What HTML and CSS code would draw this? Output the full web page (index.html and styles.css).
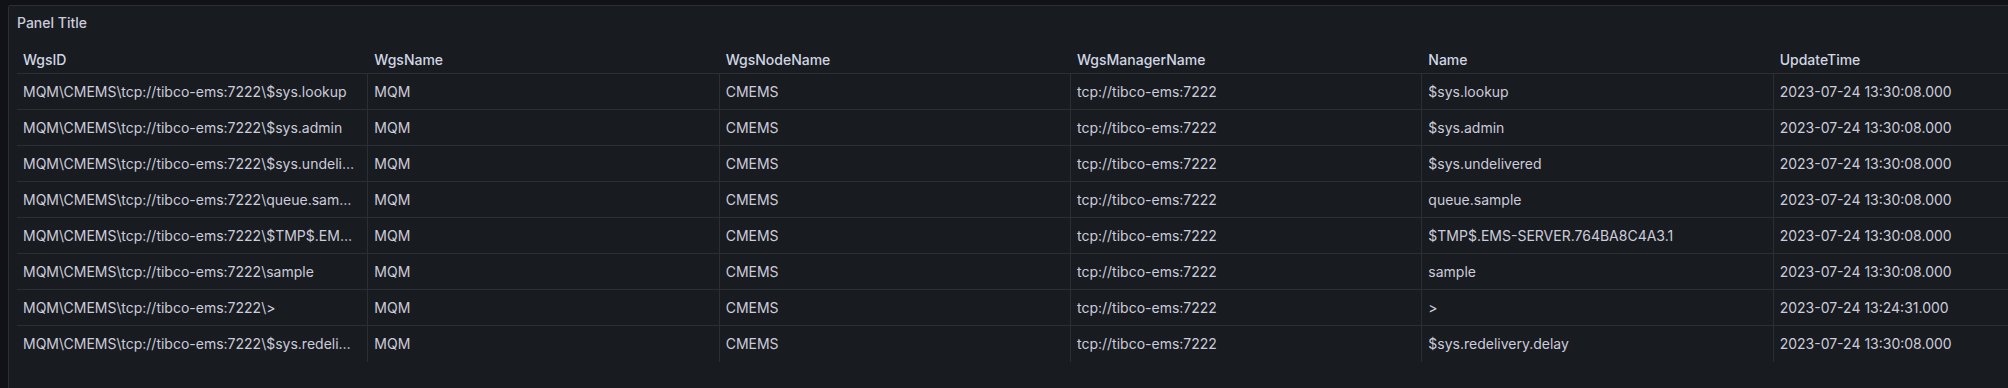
FILE: index.html
```html
<!DOCTYPE html>
<html>
  <head>
    <title>Panel Title</title>
    <link rel="stylesheet" href="styles.css">
  </head>
  <body>
    <div class="panel">
      <div class="panel-header">
        <div class="panel-title">Panel Title</div>
      </div>
      <div class="panel-content">
        <div class="table">
          <div class="table-head">
            <div class="th">WgsID</div>
            <div class="th">WgsName</div>
            <div class="th">WgsNodeName</div>
            <div class="th">WgsManagerName</div>
            <div class="th">Name</div>
            <div class="th">UpdateTime</div>
          </div>
          <div class="table-body">
            <div class="tr">
              <div class="td">MQM\CMEMS\tcp://tibco-ems:7222\$sys.lookup</div>
              <div class="td">MQM</div>
              <div class="td">CMEMS</div>
              <div class="td">tcp://tibco-ems:7222</div>
              <div class="td">$sys.lookup</div>
              <div class="td">2023-07-24 13:30:08.000</div>
            </div>
            <div class="tr">
              <div class="td">MQM\CMEMS\tcp://tibco-ems:7222\$sys.admin</div>
              <div class="td">MQM</div>
              <div class="td">CMEMS</div>
              <div class="td">tcp://tibco-ems:7222</div>
              <div class="td">$sys.admin</div>
              <div class="td">2023-07-24 13:30:08.000</div>
            </div>
            <div class="tr">
              <div class="td">MQM\CMEMS\tcp://tibco-ems:7222\$sys.undelivered</div>
              <div class="td">MQM</div>
              <div class="td">CMEMS</div>
              <div class="td">tcp://tibco-ems:7222</div>
              <div class="td">$sys.undelivered</div>
              <div class="td">2023-07-24 13:30:08.000</div>
            </div>
            <div class="tr">
              <div class="td">MQM\CMEMS\tcp://tibco-ems:7222\queue.sample</div>
              <div class="td">MQM</div>
              <div class="td">CMEMS</div>
              <div class="td">tcp://tibco-ems:7222</div>
              <div class="td">queue.sample</div>
              <div class="td">2023-07-24 13:30:08.000</div>
            </div>
            <div class="tr">
              <div class="td">MQM\CMEMS\tcp://tibco-ems:7222\$TMP$.EMS-SERVER.764BA8C4A3.1</div>
              <div class="td">MQM</div>
              <div class="td">CMEMS</div>
              <div class="td">tcp://tibco-ems:7222</div>
              <div class="td">$TMP$.EMS-SERVER.764BA8C4A3.1</div>
              <div class="td">2023-07-24 13:30:08.000</div>
            </div>
            <div class="tr">
              <div class="td">MQM\CMEMS\tcp://tibco-ems:7222\sample</div>
              <div class="td">MQM</div>
              <div class="td">CMEMS</div>
              <div class="td">tcp://tibco-ems:7222</div>
              <div class="td">sample</div>
              <div class="td">2023-07-24 13:30:08.000</div>
            </div>
            <div class="tr">
              <div class="td">MQM\CMEMS\tcp://tibco-ems:7222\&gt;</div>
              <div class="td">MQM</div>
              <div class="td">CMEMS</div>
              <div class="td">tcp://tibco-ems:7222</div>
              <div class="td">&gt;</div>
              <div class="td">2023-07-24 13:24:31.000</div>
            </div>
            <div class="tr">
              <div class="td">MQM\CMEMS\tcp://tibco-ems:7222\$sys.redelivery.delay</div>
              <div class="td">MQM</div>
              <div class="td">CMEMS</div>
              <div class="td">tcp://tibco-ems:7222</div>
              <div class="td">$sys.redelivery.delay</div>
              <div class="td">2023-07-24 13:30:08.000</div>
            </div>
          </div>
        </div>
      </div>
    </div>
  </body>
</html>
```

FILE: styles.css
```css
html,
body {
  margin: 0;
  padding: 0;
  background: #111217;
  overflow: hidden;
}

body {
  padding: 5px 0 0 8px;
  font-family: "Inter", "Roboto", sans-serif;
  font-size: 14px;
  color: #ccccdc;
  height: 388px;
  box-sizing: border-box;
}

.panel {
  width: 2126px;
  height: 400px;
  background: #181b1f;
  border: 1px solid #2b2e35;
  border-radius: 2px;
  box-sizing: border-box;
}

.panel-header {
  height: 32px;
  display: flex;
  align-items: center;
  padding: 0 8px;
}

.panel-title {
  font-size: 14px;
  font-weight: 500;
  color: #ccccdc;
}

.panel-content {
  padding: 0 8px;
}

.table {
  width: 2108px;
}

.table-head,
.tr {
  display: grid;
  grid-template-columns: repeat(6, 351.33px);
}

.table-head {
  height: 36px;
  border-bottom: 1px solid #2b2e35;
  box-sizing: border-box;
}

.th {
  display: flex;
  align-items: center;
  padding: 8px 6px 0;
  font-weight: 500;
  color: #d0d6e4;
}

.tr {
  height: 36px;
  border-bottom: 1px solid #2b2e35;
  box-sizing: border-box;
}

.tr:last-child {
  border-bottom: none;
}

.td {
  padding: 0 10px 0 6px;
  line-height: 35px;
  white-space: nowrap;
  overflow: hidden;
  text-overflow: ellipsis;
  border-right: 1px solid #2b2e35;
}

.tr:last-child .td {
  line-height: 36px;
}
```
